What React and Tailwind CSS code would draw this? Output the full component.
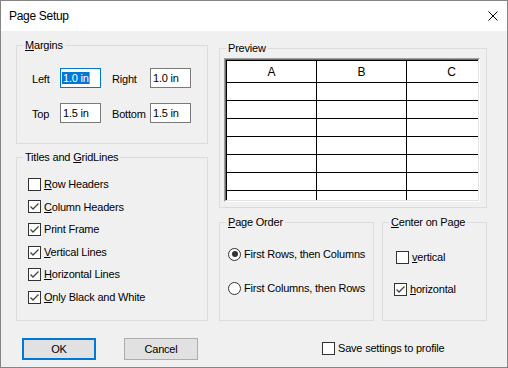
import React from 'react';

const Check = ({ checked }) => (
  <span className="w-[13px] h-[13px] shrink-0 border border-[#333333] bg-white flex items-center justify-center">
    {checked && (
      <svg width="11" height="11" viewBox="0 0 11 11">
        <polyline points="1.5,5.5 4,8 9.5,2.5" fill="none" stroke="#444444" strokeWidth="1.3" />
      </svg>
    )}
  </span>
);

const Radio = ({ on }) => (
  <span className="w-[13px] h-[13px] shrink-0 rounded-full border border-[#333333] bg-white flex items-center justify-center">
    {on && <span className="w-[6px] h-[6px] rounded-full bg-[#333333]" />}
  </span>
);

// access-key underline
const K = ({ children }) => <span className="underline decoration-1 underline-offset-[1px]">{children}</span>;

const Group = ({ label, className, children }) => (
  <div className={`relative border border-[#dcdcdc] ${className}`}>
    <span className="absolute left-[6px] -top-[7px] px-[2px] leading-[13px] bg-[#f0f0f0]">{label}</span>
    {children}
  </div>
);

const Field = ({ value, focused }) => (
  <div
    className={`w-[41px] h-[20px] bg-white border flex items-center pl-[1px] ${
      focused ? 'border-[#0078d7]' : 'border-[#7a7a7a]'
    }`}
  >
    {focused ? (
      <>
        <span className="bg-[#0078d7] text-white pl-[1px] leading-[12px]">{value}</span>
        <span className="w-[1px] h-[12px] bg-[#ff8728]" />
      </>
    ) : (
      <span className="pl-[1px]">{value}</span>
    )}
  </div>
);

const CheckRow = ({ checked, children }) => (
  <div className="h-[22.6px] flex items-center">
    <Check checked={checked} />
    <span className="ml-[3px]">{children}</span>
  </div>
);

const PreviewGrid = () => {
  const rows = [0, 1, 2, 3, 4, 5, 6];
  const cols = ['A', 'B', 'C'];
  return (
    <div className="w-[256px] h-[144px] border-l border-t border-[#a0a0a0] border-r-white border-b-white border-r border-b">
      <div className="w-full h-full border-l border-t border-[#696969] border-r-[#e3e3e3] border-b-[#e3e3e3] border-r border-b bg-white overflow-hidden">
        <div className="w-[300px] border-t border-black">
          <div className="flex h-[21px]">
            {cols.map((c) => (
              <div key={c} className="w-[90px] shrink-0 border-l border-black flex items-center justify-center text-[12px]">
                {c}
              </div>
            ))}
          </div>
          {rows.map((r) => (
            <div key={r} className="flex h-[18px] border-t border-black">
              {cols.map((c) => (
                <div key={c} className="w-[90px] shrink-0 border-l border-black" />
              ))}
            </div>
          ))}
        </div>
      </div>
    </div>
  );
};

export default function App() {
  return (
    <div className="w-[508px] h-[368px] border border-[#858585] flex flex-col text-[11px] text-black font-['Liberation_Sans',Arial,sans-serif] tracking-[-0.2px] select-none">
      {/* title bar */}
      <div className="h-[30px] bg-white flex items-center justify-between pl-[8px] pr-[9px]">
        <span className="text-[12px] tracking-[-0.3px]">Page Setup</span>
        <svg width="10" height="10" viewBox="0 0 10 10">
          <path d="M0.5 0.5 L9.5 9.5 M9.5 0.5 L0.5 9.5" stroke="#000" strokeWidth="1" />
        </svg>
      </div>

      <div className="flex-1 bg-[#f0f0f0] flex flex-col">
        <div className="flex pl-[15px] pt-[14px]">
          {/* left column */}
          <div className="w-[192px] flex flex-col">
            <Group label={<><K>M</K>argins</>} className="h-[99px] pl-[15px] pt-[22px]">
              <div className="flex items-center h-[20px]">
                <span className="w-[28px] mt-[3px]">Left</span>
                <Field value="1.0 in" focused />
                <span className="w-[11px]" />
                <span className="w-[38px] mt-[2px]">Right</span>
                <Field value="1.0 in" />
              </div>
              <div className="flex items-center h-[20px] mt-[15px]">
                <span className="w-[28px] mt-[2px]">Top</span>
                <Field value="1.5 in" />
                <span className="w-[11px]" />
                <span className="w-[38px] mt-[2px]">Bottom</span>
                <Field value="1.5 in" />
              </div>
            </Group>

            <Group label={<>Titles and <K>G</K>ridLines</>} className="h-[164px] mt-[13px] pl-[11px] pt-[15px]">
              <CheckRow><K>R</K>ow Headers</CheckRow>
              <CheckRow checked><K>C</K>olumn Headers</CheckRow>
              <CheckRow checked>Print Frame</CheckRow>
              <CheckRow checked><K>V</K>ertical Lines</CheckRow>
              <CheckRow checked><K>H</K>orizontal Lines</CheckRow>
              <CheckRow checked><K>O</K>nly Black and White</CheckRow>
            </Group>
          </div>

          {/* right column */}
          <div className="w-[268px] ml-[11px] mt-[3px] flex flex-col">
            <Group label="Preview" className="h-[160px] pl-[4px] pt-[9px]">
              <PreviewGrid />
            </Group>

            <div className="flex mt-[14px] gap-[8px]">
              <Group label={<><K>P</K>age Order</>} className="w-[155px] h-[99px] pl-[8px] pt-[21px]">
                <div className="h-[20px] flex items-center">
                  <Radio on />
                  <span className="ml-[3px]">First Rows, then Columns</span>
                </div>
                <div className="h-[20px] flex items-center mt-[14px]">
                  <Radio />
                  <span className="ml-[3px]">First Columns, then Rows</span>
                </div>
              </Group>

              <Group label={<><K>C</K>enter on Page</>} className="w-[105px] h-[99px] pt-[24px]">
                <div className="h-[20px] flex items-center ml-[13px]">
                  <Check />
                  <span className="ml-[3px]"><K>v</K>ertical</span>
                </div>
                <div className="h-[20px] flex items-center ml-[11px] mt-[12px]">
                  <Check checked />
                  <span className="ml-[3px]"><K>h</K>orizontal</span>
                </div>
              </Group>
            </div>
          </div>
        </div>

        {/* buttons */}
        <div className="flex items-center pl-[21px] mt-[17px]">
          <button className="w-[74px] h-[22px] bg-[#e1e1e1] border-2 border-[#0078d7] flex items-center justify-center">
            OK
          </button>
          <button className="w-[74px] h-[22px] ml-[28px] bg-[#e1e1e1] border border-[#adadad] flex items-center justify-center">
            Cancel
          </button>
          <div className="flex items-center ml-[124px] -mt-[2px]">
            <Check />
            <span className="ml-[3px]">Save settings to profile</span>
          </div>
        </div>
      </div>
    </div>
  );
}
